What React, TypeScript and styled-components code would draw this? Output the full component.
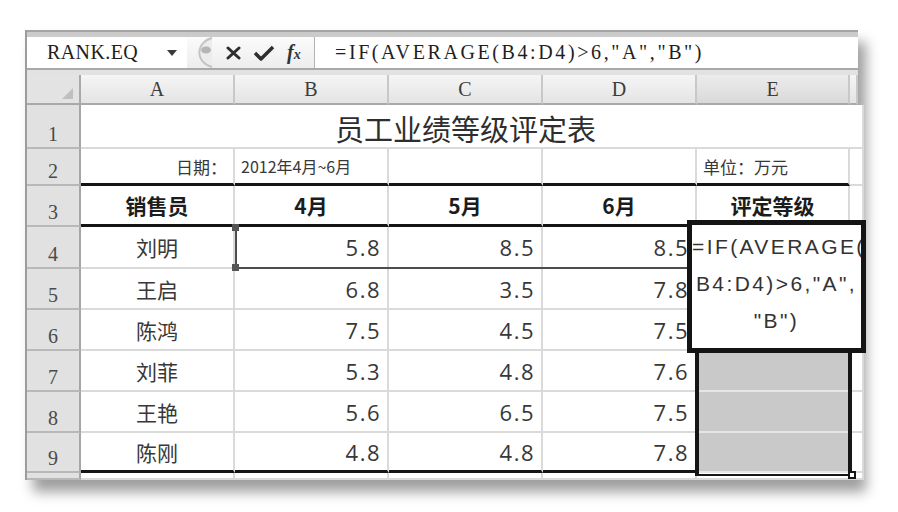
import React from 'react'
import styled, { createGlobalStyle } from 'styled-components'

const GlobalStyle = createGlobalStyle`
  body {
    margin: 0;
    background: #fff;
    font-family: "Noto Sans CJK SC", "Noto Sans", sans-serif;
  }
`

const Page = styled.div`
  padding: 30px 0 32px 25px;
`

const Sheet = styled.div`
  width: 833px;
  box-sizing: border-box;
  border-left: 2px solid #9c9c9c;
  background: #fff;
  box-shadow: 8px 12px 12px rgba(0, 0, 0, 0.38);
`

const FormulaBar = styled.div`
  border-top: 2px solid #a4a4a4;
  padding-top: 5px;
  background: linear-gradient(#c9c9c9, #dedede);
`

const InputRow = styled.div`
  display: flex;
  height: 31px;
  background: #fff;
  font-family: "Liberation Serif", serif;
  font-size: 20px;
  letter-spacing: 2.6px;
  color: #1e1e1e;
`

const NameBox = styled.div`
  width: 160px;
  box-sizing: border-box;
  display: flex;
  align-items: center;
  justify-content: space-between;
  padding: 0 10px 0 20px;
  letter-spacing: 0.4px;
`

const Arrow = styled.span`
  width: 0;
  height: 0;
  border-left: 5px solid transparent;
  border-right: 5px solid transparent;
  border-top: 6px solid #3a3a3a;
`

const Tools = styled.div`
  width: 128px;
  box-sizing: border-box;
  display: flex;
  align-items: center;
  gap: 12px;
  padding-left: 3px;
  background: linear-gradient(#fbfbfb, #ededed);
  border-right: 1px solid #b3b3b3;
`

const Fx = styled.span`
  font-family: "Liberation Serif", serif;
  font-style: italic;
  font-weight: bold;
  font-size: 20px;
  letter-spacing: 0;
  color: #333;
  small {
    font-size: 14px;
  }
`

const Formula = styled.div`
  flex: 1;
  display: flex;
  align-items: center;
  padding-left: 20px;
  white-space: pre;
`

const BarFoot = styled.div`
  height: 5px;
  border-top: 2px solid #a9a9a9;
  background: #e2e2e2;
`

const GridWrap = styled.div`
  position: relative;
`

const Grid = styled.div`
  display: grid;
  grid-template-columns: 54px 154px 154px 154px 154px 153px 8px;
  grid-template-rows: 30px 44px 37px 41px 42px 41px 41px 41px 41px 40px 7px;
`

const OverlayGrid = styled(Grid)`
  position: absolute;
  inset: 0;
  pointer-events: none;
`

const Corner = styled.div`
  display: flex;
  align-items: flex-end;
  justify-content: flex-end;
  padding: 0 6px 4px 0;
  background: #e3e3e3;
  border-right: 2px solid #a9a9a9;
  border-bottom: 2px solid #a9a9a9;
`

const CornerMark = styled.span`
  width: 0;
  height: 0;
  border-left: 11px solid transparent;
  border-bottom: 11px solid #bfbfbf;
`

const ColHead = styled.div<{ $active?: boolean }>`
  display: flex;
  align-items: center;
  justify-content: center;
  background: ${(p) =>
    p.$active ? 'linear-gradient(#ececec, #d9d9d9)' : 'linear-gradient(#f5f5f5, #e4e4e4)'};
  border-right: 2px solid #c8c8c8;
  border-bottom: 2px solid #a9a9a9;
  font-family: "Liberation Serif", serif;
  font-size: 20px;
  color: #3c3c3c;
`

const RowHead = styled.div`
  display: flex;
  align-items: flex-end;
  justify-content: center;
  padding-bottom: 1px;
  background: #e1e1e1;
  border-right: 2px solid #a6a6a6;
  border-bottom: 2px solid #b8b8b8;
  font-family: "Liberation Serif", serif;
  font-size: 20px;
  color: #4a4a4a;
`

type CellProps = {
  $align?: 'left' | 'center' | 'right'
  $size?: number
  $bold?: boolean
  $rule?: boolean
  $fill?: string
  $num?: boolean
  $span?: number
}

const justify = { left: 'flex-start', center: 'center', right: 'flex-end' }

const Cell = styled.div<CellProps>`
  grid-column: span ${(p) => p.$span || 1};
  display: flex;
  align-items: center;
  justify-content: ${(p) => justify[p.$align || 'left']};
  padding: 0 6px;
  overflow: hidden;
  white-space: nowrap;
  background: ${(p) => p.$fill || '#fff'};
  border-right: ${(p) => (p.$span ? '0' : '2px solid #dadada')};
  border-bottom: ${(p) =>
    p.$rule ? '3px solid #151515' : p.$fill ? '2px solid #e6e6e6' : '2px solid #dadada'};
  font-family: ${(p) =>
    p.$num ? '"Open Sans", "Liberation Sans", sans-serif' : '"Noto Sans CJK SC", sans-serif'};
  font-size: ${(p) => p.$size || 20}px;
  font-weight: ${(p) => (p.$bold ? 700 : 400)};
  letter-spacing: ${(p) => (p.$num ? '1.5px' : '0')};
  color: ${(p) => (p.$bold ? '#1c1c1c' : '#383838')};
`

const Title = styled(Cell)`
  padding-top: 4px;
  color: #2e2e2e;
`

const RangeFinder = styled.div`
  grid-column: 3 / 6;
  grid-row: 5;
  position: relative;
  border-left: 2px solid #4d4d4d;
  border-bottom: 2px solid #4d4d4d;
  &::before,
  &::after {
    content: '';
    position: absolute;
    left: -5px;
    width: 7px;
    height: 7px;
    background: #555;
  }
  &::before {
    top: -3px;
  }
  &::after {
    bottom: -4px;
  }
`

const Selection = styled.div`
  grid-column: 6;
  grid-row: 5 / 11;
  margin: 0 -2px -3px -2px;
  position: relative;
  border-left: 4px solid #161616;
  border-right: 4px solid #161616;
  border-bottom: 2px solid #161616;
  &::after {
    content: '';
    position: absolute;
    right: -8px;
    bottom: -5px;
    width: 4px;
    height: 4px;
    border: 2px solid #161616;
    background: #fff;
  }
`

const EditBox = styled.div`
  grid-column: 6;
  grid-row: 5 / 8;
  margin: -7px -16px -2px -10px;
  position: relative;
  z-index: 2;
  border: 5px solid #141414;
  background: #fff;
  padding-top: 3px;
  overflow: hidden;
  font-family: "Liberation Sans", "Open Sans", sans-serif;
  font-size: 21px;
  letter-spacing: 2.4px;
  line-height: 37px;
  color: #333;
`

const EditLine = styled.div`
  white-space: nowrap;
  text-align: center;
`

const rows = [
  ['刘明', '5.8', '8.5', '8.5'],
  ['王启', '6.8', '3.5', '7.8'],
  ['陈鸿', '7.5', '4.5', '7.5'],
  ['刘菲', '5.3', '4.8', '7.6'],
  ['王艳', '5.6', '6.5', '7.5'],
  ['陈刚', '4.8', '4.8', '7.8'],
]

const Splitter = () => (
  <svg width="24" height="31" viewBox="0 0 24 31">
    <path d="M22 1 A 17 15 0 0 0 22 30" fill="#ececec" stroke="#c4c4c4" strokeWidth="2" />
    <ellipse cx="16" cy="13" rx="5" ry="3.5" fill="#b5b5b5" />
  </svg>
)

const Cancel = () => (
  <svg width="15" height="14" viewBox="0 0 15 14">
    <path d="M2 2 L13 12 M13 2 L2 12" stroke="#2e2e2e" strokeWidth="3" strokeLinecap="round" />
  </svg>
)

const Enter = () => (
  <svg width="22" height="16" viewBox="0 0 22 16">
    <path d="M2 8 L8 14 L20 2" stroke="#2e2e2e" strokeWidth="3.5" fill="none" strokeLinejoin="round" />
  </svg>
)

export default function App() {
  return (
    <Page>
      <GlobalStyle />
      <Sheet>
        <FormulaBar>
          <InputRow>
            <NameBox>
              RANK.EQ
              <Arrow />
            </NameBox>
            <Tools>
              <Splitter />
              <Cancel />
              <Enter />
              <Fx>
                f<small>x</small>
              </Fx>
            </Tools>
            <Formula>=IF(AVERAGE(B4:D4)&gt;6,"A","B")</Formula>
          </InputRow>
          <BarFoot />
        </FormulaBar>
        <GridWrap>
          <Grid>
            <Corner>
              <CornerMark />
            </Corner>
            <ColHead>A</ColHead>
            <ColHead>B</ColHead>
            <ColHead>C</ColHead>
            <ColHead>D</ColHead>
            <ColHead $active>E</ColHead>
            <ColHead />

            <RowHead>1</RowHead>
            <Title $span={5} $align="center" $size={29}>
              员工业绩等级评定表
            </Title>
            <Cell />

            <RowHead>2</RowHead>
            <Cell $align="right" $size={17} $rule>
              日期：
            </Cell>
            <Cell $size={16} $rule>
              2012年4月~6月
            </Cell>
            <Cell $rule />
            <Cell $rule />
            <Cell $size={17} $rule>
              单位：万元
            </Cell>
            <Cell />

            <RowHead>3</RowHead>
            <Cell $align="center" $size={21} $bold $rule>
              销售员
            </Cell>
            <Cell $align="center" $size={21} $bold $rule>
              4月
            </Cell>
            <Cell $align="center" $size={21} $bold $rule>
              5月
            </Cell>
            <Cell $align="center" $size={21} $bold $rule>
              6月
            </Cell>
            <Cell $align="center" $size={21} $bold $rule>
              评定等级
            </Cell>
            <Cell />

            {rows.map(([name, b, c, d], i) => {
              const last = i === rows.length - 1
              return (
                <React.Fragment key={name}>
                  <RowHead>{i + 4}</RowHead>
                  <Cell $align="center" $size={21} $rule={last}>
                    {name}
                  </Cell>
                  <Cell $align="right" $size={22} $num $rule={last}>
                    {b}
                  </Cell>
                  <Cell $align="right" $size={22} $num $rule={last}>
                    {c}
                  </Cell>
                  <Cell $align="right" $size={22} $num $rule={last}>
                    {d}
                  </Cell>
                  <Cell $fill={i >= 3 ? '#c9c9c9' : undefined} />
                  <Cell />
                </React.Fragment>
              )
            })}

            <RowHead />
            <Cell />
            <Cell />
            <Cell />
            <Cell />
            <Cell />
            <Cell />
          </Grid>

          <OverlayGrid>
            <RangeFinder />
            <Selection />
            <EditBox>
              <EditLine>=IF(AVERAGE(</EditLine>
              <EditLine>B4:D4)&gt;6,"A",</EditLine>
              <EditLine>"B")</EditLine>
            </EditBox>
          </OverlayGrid>
        </GridWrap>
      </Sheet>
    </Page>
  )
}
